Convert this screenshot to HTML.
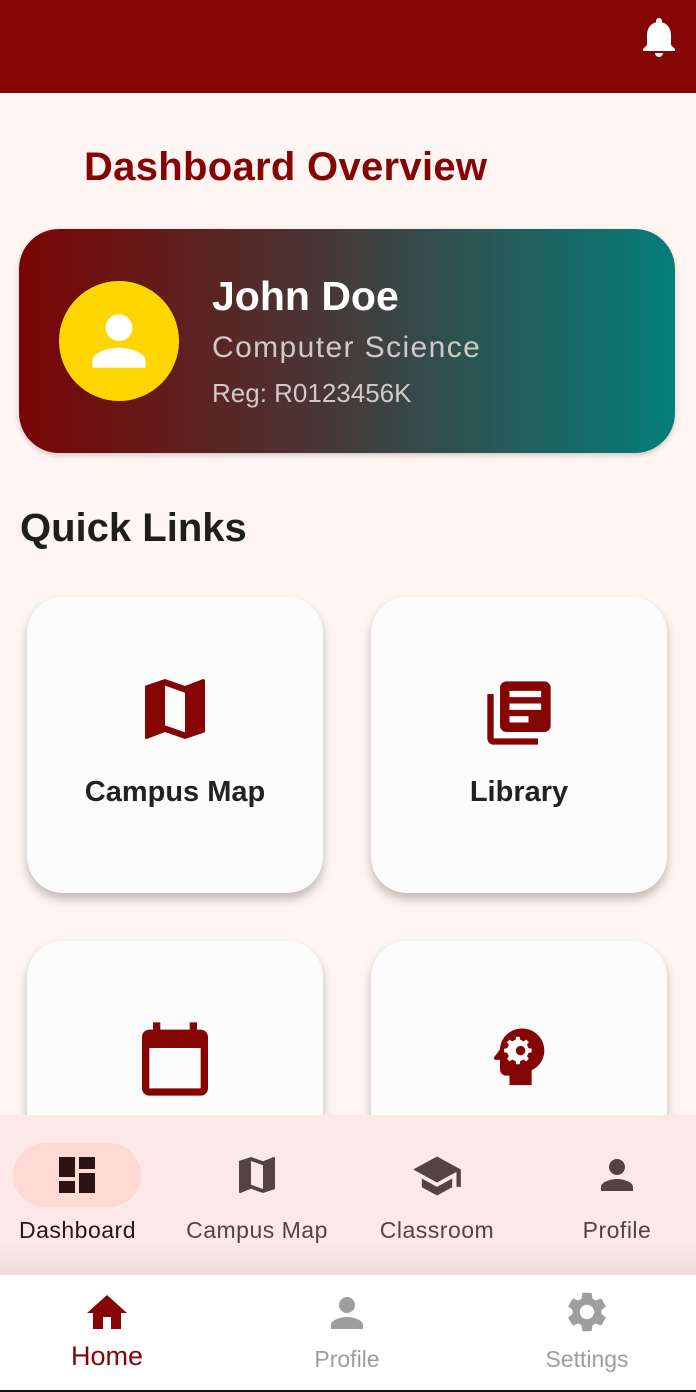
<!DOCTYPE html><html><head><style>
body{margin:0;width:696px;height:1392px;overflow:hidden;background:#fff5f3;font-family:"Liberation Sans",sans-serif;position:relative}
.a{position:absolute}
.top{left:0;top:0;width:696px;height:93px;background:#850505}
.card{background:#fdfcfd;border-radius:36px;width:296px;height:296px;box-shadow:0 6px 10px rgba(0,0,0,.25)}
.card span{position:absolute;left:0;width:296px;top:179px;text-align:center;font-weight:bold;font-size:29px;color:#222}
</style></head><body>
<div class="a top"></div>
<svg class="a" style="left:635px;top:13px" width="48" height="48" viewBox="0 0 24 24"><path fill="#fff" d="M12 22c1.1 0 2-.9 2-2h-4c0 1.1.9 2 2 2zm6-6v-5c0-3.07-1.63-5.64-4.5-6.32V4c0-.83-.67-1.5-1.5-1.5s-1.5.67-1.5 1.5v.68C7.64 5.36 6 7.920 6 11v5l-2 2v1h16v-1l-2-2z"/></svg>
<div class="a" style="left:84px;top:145px;font-size:40px;font-weight:bold;color:#850505;letter-spacing:.3px">Dashboard Overview</div>
<div class="a" style="left:19px;top:229px;width:656px;height:224px;border-radius:40px;background:linear-gradient(90deg,#7a0404,#4a3535 45%,#047e7a);box-shadow:0 2px 6px rgba(0,0,0,.2)"></div>
<div class="a" style="left:59px;top:281px;width:120px;height:120px;border-radius:50%;background:#fdd600"></div>
<svg class="a" style="left:79px;top:301px" width="80" height="80" viewBox="0 0 24 24"><path fill="#fff" d="M12 12c2.2 0 4-1.8 4-4s-1.8-4-4-4-4 1.8-4 4 1.8 4 4 4zm0 2c-2.7 0-8 1.3-8 4v2h16v-2c0-2.7-5.3-4-8-4z"/></svg>
<div class="a" style="left:212px;top:273px;font-size:41px;font-weight:bold;color:#fff">John Doe</div>
<div class="a" style="left:212px;top:331px;font-size:30px;color:#d2c8c8;letter-spacing:1.4px">Computer Science</div>
<div class="a" style="left:212px;top:378px;font-size:26px;color:#d2c8c8">Reg: R0123456K</div>
<div class="a" style="left:20px;top:506px;font-size:40px;font-weight:bold;color:#1e1e1e">Quick Links</div>
<div class="a card" style="left:27px;top:597px"><svg class="a" style="left:108px;top:72px" width="80" height="80" viewBox="0 0 24 24"><path fill="#850505" d="M20.5 3l-.16.03L15 5.1 9 3 3.36 4.9c-.21.07-.36.25-.36.48V20.5c0 .28.22.5.5.5l.16-.03L9 18.9l6 2.1 5.64-1.9c.21-.07.36-.25.36-.48V3.5c0-.28-.22-.5-.5-.5zM15 19l-6-2.11V5l6 2.11V19z"/></svg><span>Campus Map</span></div>
<div class="a card" style="left:371px;top:597px"><svg class="a" style="left:110px;top:78px" width="76" height="76" viewBox="0 0 24 24"><path fill="#850505" d="M4 6H2v14c0 1.1.9 2 2 2h14v-2H4V6zm16-4H8c-1.1 0-2 .9-2 2v12c0 1.1.9 2 2 2h12c1.1 0 2-.9 2-2V4c0-1.1-.9-2-2-2zm-1 9H9V9h10v2zm-4 4H9v-2h6v2zm4-8H9V5h10v2z"/></svg><span>Library</span></div>
<div class="a card" style="left:27px;top:941px"><svg class="a" style="left:104px;top:74px" width="88" height="88" viewBox="0 0 24 24"><path fill="#850505" d="M19 4h-1V2h-2v2H8V2H6v2H5c-1.1 0-2 .9-2 2v14c0 1.1.9 2 2 2h14c1.1 0 2-.9 2-2V6c0-1.1-.9-2-2-2zm0 16H5V9h14v11z"/></svg></div>
<div class="a card" style="left:371px;top:941px"><svg class="a" style="left:110px;top:78px" width="76" height="76" viewBox="0 0 24 24"><path fill="#850505" d="M13 3C9.2 3 6.1 5.9 6 9.6L4.1 12.1c-.2.3 0 .8.4.8H6v3c0 1.1.9 2 2 2h1v3h7v-4.7c2.4-1.1 4-3.5 4-6.2 0-3.9-3.1-7-7-7zm3 7.5l-1 .2c-.1.4-.3.7-.5 1l.6.9-.8.8-.9-.6c-.3.2-.6.4-1 .5l-.2 1h-1.1l-.2-1c-.4-.1-.7-.3-1-.5l-.9.6-.8-.8.6-.9c-.2-.3-.4-.6-.5-1l-1-.2V9.4l1-.2c.1-.4.3-.7.5-1l-.6-.9.8-.8.9.6c.3-.2.6-.4 1-.5l.2-1h1.1l.2 1c.4.1.7.3 1 .5l.9-.6.8.8-.6.9c.2.3.4.6.5 1l1 .2v1.1zM12.5 8.5c-.8 0-1.5.7-1.5 1.5s.7 1.5 1.5 1.5S14 10.8 14 10s-.7-1.5-1.5-1.5z"/></svg></div>
<div class="a" style="left:0;top:1115px;width:696px;height:160px;background:linear-gradient(#fce8e6 80%,#f0dcdb)"></div>
<div class="a" style="left:13px;top:1143px;width:128px;height:64px;border-radius:32px;background:#ffdad5"></div>
<svg class="a" style="left:53px;top:1151px" width="48" height="48" viewBox="0 0 24 24"><path fill="#2d1414" d="M3 13h8V3H3v10zm0 8h8v-6H3v6zm10 0h8V11h-8v10zm0-18v6h8V3h-8z"/></svg>
<svg class="a" style="left:233px;top:1151px" width="48" height="48" viewBox="0 0 24 24"><path fill="#534341" d="M20.5 3l-.16.03L15 5.1 9 3 3.36 4.9c-.21.07-.36.25-.36.48V20.5c0 .28.22.5.5.5l.16-.03L9 18.9l6 2.1 5.64-1.9c.21-.07.36-.25.36-.48V3.5c0-.28-.22-.5-.5-.5zM15 19l-6-2.11V5l6 2.11V19z"/></svg>
<svg class="a" style="left:411px;top:1150px" width="52" height="52" viewBox="0 0 24 24"><path fill="#534341" d="M5 13.18v4L12 21l7-3.82v-4L12 17l-7-3.82zM12 3L1 9l11 6 9-4.91V17h2V9L12 3z"/></svg>
<svg class="a" style="left:593px;top:1151px" width="48" height="48" viewBox="0 0 24 24"><path fill="#534341" d="M12 12c2.2 0 4-1.8 4-4s-1.8-4-4-4-4 1.8-4 4 1.8 4 4 4zm0 2c-2.7 0-8 1.3-8 4v2h16v-2c0-2.7-5.3-4-8-4z"/></svg>
<div class="a" style="left:0;top:1217px;width:155px;text-align:center;font-size:23px;color:#2d1414;letter-spacing:.5px">Dashboard</div>
<div class="a" style="left:172px;top:1217px;width:170px;text-align:center;font-size:23px;color:#534341;letter-spacing:.5px">Campus Map</div>
<div class="a" style="left:357px;top:1217px;width:160px;text-align:center;font-size:23px;color:#534341;letter-spacing:.5px">Classroom</div>
<div class="a" style="left:537px;top:1217px;width:160px;text-align:center;font-size:23px;color:#534341;letter-spacing:.5px">Profile</div>
<div class="a" style="left:0;top:1275px;width:696px;height:115px;background:#fff;border-bottom:2px solid #111"></div>
<svg class="a" style="left:83px;top:1289px" width="48" height="48" viewBox="0 0 24 24"><path fill="#850505" d="M10 20v-6h4v6h5v-8h3L12 3 2 12h3v8z"/></svg>
<svg class="a" style="left:323px;top:1289px" width="48" height="48" viewBox="0 0 24 24"><path fill="#9e9e9e" d="M12 12c2.2 0 4-1.8 4-4s-1.8-4-4-4-4 1.8-4 4 1.8 4 4 4zm0 2c-2.7 0-8 1.3-8 4v2h16v-2c0-2.7-5.3-4-8-4z"/></svg>
<svg class="a" style="left:563px;top:1288px" width="48" height="48" viewBox="0 0 24 24"><path fill="#9e9e9e" d="M19.14 12.94c.04-.3.06-.61.06-.94 0-.32-.02-.64-.07-.94l2.030-1.58c.18-.14.23-.41.12-.61l-1.92-3.32c-.12-.22-.37-.29-.59-.22l-2.39.96c-.5-.38-1.03-.7-1.62-.94l-.36-2.54c-.04-.24-.24-.41-.48-.41h-3.84c-.24 0-.43.17-.47.41l-.36 2.54c-.59.24-1.13.57-1.62.94l-2.39-.96c-.22-.08-.47 0-.59.22L2.74 8.87c-.12.21-.08.47.12.61l2.03 1.58c-.05.3-.09.63-.09.94s.02.64.07.94l-2.03 1.58c-.18.14-.23.41-.12.61l1.92 3.32c.12.22.37.29.59.22l2.39-.96c.5.38 1.03.7 1.62.94l.36 2.54c.05.24.24.41.48.41h3.84c.24 0 .44-.17.47-.41l.36-2.54c.59-.24 1.13-.56 1.62-.94l2.39.96c.22.08.47 0 .59-.22l1.92-3.32c.12-.22.07-.47-.12-.61l-2.01-1.58zM12 15.6c-1.98 0-3.6-1.62-3.6-3.6s1.62-3.6 3.6-3.6 3.6 1.62 3.6 3.6-1.62 3.6-3.6 3.6z"/></svg>
<div class="a" style="left:27px;top:1341px;width:160px;text-align:center;font-size:27px;color:#850505">Home</div>
<div class="a" style="left:267px;top:1346px;width:160px;text-align:center;font-size:23px;color:#9e9e9e">Profile</div>
<div class="a" style="left:507px;top:1346px;width:160px;text-align:center;font-size:23px;color:#9e9e9e">Settings</div>
</body></html>
